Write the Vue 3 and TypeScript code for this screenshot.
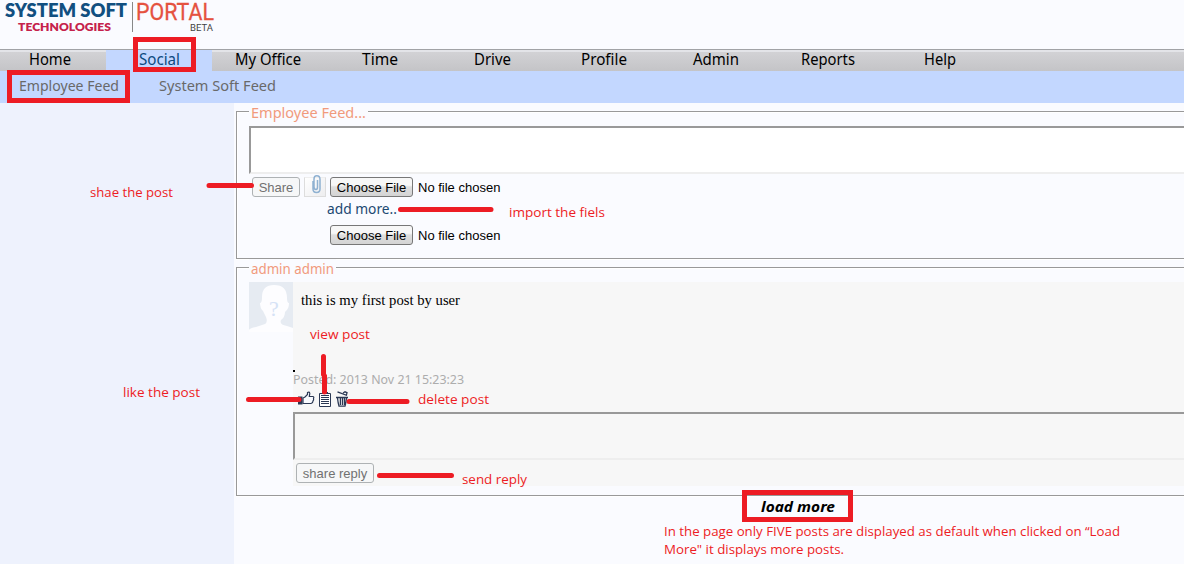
<script setup lang="ts">
interface Tab { label: string; width: number; text: number; active?: boolean }
interface Note { text: string; x: number; y: number; width: number }

const tabs: Tab[] = [
  { label: 'Home', width: 106, text: 42 },
  { label: 'Social', width: 106, text: 41, active: true },
  { label: 'My Office', width: 112, text: 66 },
  { label: 'Time', width: 112, text: 36 },
  { label: 'Drive', width: 112, text: 37 },
  { label: 'Profile', width: 112, text: 46 },
  { label: 'Admin', width: 112, text: 46 },
  { label: 'Reports', width: 112, text: 54 },
  { label: 'Help', width: 112, text: 32 },
]

const notes: Note[] = [
  { text: 'shae the post', x: 90, y: 197, width: 83 },
  { text: 'import the fiels', x: 509, y: 217, width: 96 },
  { text: 'view post', x: 310, y: 339, width: 60 },
  { text: 'like the post', x: 123, y: 397, width: 77 },
  { text: 'delete post', x: 418, y: 404, width: 71 },
  { text: 'send reply', x: 462, y: 484, width: 65 },
  { text: 'In the page only FIVE posts are displayed as default when clicked on “Load', x: 664, y: 536, width: 456 },
  { text: 'More" it displays more posts.', x: 664, y: 554, width: 180 },
]
</script>

<template>
  <div class="page">
    <header>
      <svg width="220" height="40" class="logo">
        <text x="5" y="17" class="lg system" textLength="122" lengthAdjust="spacingAndGlyphs">SYSTEM SOFT</text>
        <text x="18" y="31" class="lg tech" textLength="93" lengthAdjust="spacingAndGlyphs">TECHNOLOGIES</text>
        <path d="M132.500 2V32" stroke="#888" />
        <text x="136" y="20" class="portal" textLength="78" lengthAdjust="spacingAndGlyphs">PORTAL</text>
        <text x="190" y="31" class="beta" textLength="23" lengthAdjust="spacingAndGlyphs">BETA</text>
      </svg>
    </header>
    <nav>
      <a v-for="t in tabs" :key="t.label" :class="{ active: t.active, first: t.label === 'Home' }" :style="{ width: t.width + 'px' }">
        <svg :width="t.text" height="21"><text x="0" y="15" :textLength="t.text" lengthAdjust="spacingAndGlyphs">{{ t.label }}</text></svg>
      </a>
    </nav>
    <div class="subnav">
      <svg width="300" height="32">
        <text x="19" y="20" textLength="100" lengthAdjust="spacingAndGlyphs">Employee Feed</text>
        <text x="159" y="20" textLength="117" lengthAdjust="spacingAndGlyphs">System Soft Feed</text>
      </svg>
    </div>
    <div class="body">
      <aside></aside>
      <main>
        <section class="box compose">
          <div class="legend"><svg width="119" height="20"><text x="2" y="15" textLength="115" lengthAdjust="spacingAndGlyphs">Employee Feed...</text></svg></div>
          <div class="area white"></div>
          <div class="tools">
            <button class="dim share">Share</button>
            <span class="clip">
              <svg width="22" height="22" fill="none">
                <path d="M10 6V14Q10 17.500 13.500 17.500Q17 17.500 17 14V4.500Q17 .8 13.800 .8Q11 .8 11 4V12Q11 14.500 13 14.500Q14.500 14.500 14.500 12V5" stroke="#8fb1d1" stroke-width="1.500" />
              </svg>
            </span>
            <button class="file">Choose File</button><span class="none">No file chosen</span>
          </div>
          <div class="more"><svg width="72" height="20"><text x="0" y="15" textLength="70" lengthAdjust="spacingAndGlyphs">add more..</text></svg></div>
          <div class="tools second"><button class="file">Choose File</button><span class="none">No file chosen</span></div>
        </section>

        <section class="box post">
          <div class="legend"><svg width="87" height="20"><text x="2" y="15" textLength="83" lengthAdjust="spacingAndGlyphs">admin admin</text></svg></div>
          <div class="entry">
            <svg class="avatar" width="44" height="50">
              <rect width="44" height="50" fill="#e6ebf2" />
              <path d="M0 50V48Q1 46 7 45L16 42Q19 40 17 35L14 29Q11 26 11 21Q13 21 13 15Q13 3 25 3Q38 3 38 16Q38 21 40 21Q40 27 36 30Q36 35 32 38Q30 43 38 44L44 46V50Z" fill="#fdfdff" />
              <text x="20" y="34" class="unknown">?</text>
            </svg>
            <div class="content">
              <svg width="200" height="30" class="message"><text x="8" y="23" textLength="159" lengthAdjust="spacingAndGlyphs">this is my first post by user</text></svg>
              <div class="dot"></div>
              <svg width="180" height="18" class="posted"><text x="0" y="12" textLength="171" lengthAdjust="spacingAndGlyphs">Posted: 2013 Nov 21 15:23:23</text></svg>
              <div class="actions">
                <svg width="17" height="16">
                  <path d="M0 5.500H4.500V13.500H0Z" fill="#2b3854" />
                  <path d="M5 12.500V7L7 6L9.500 3.500V1.500Q11.500 .3 11.800 2.500L11.300 5.500H15Q16.300 6 15.500 7.500Q16 9 15 10Q15 12 13 12.500Z" fill="#f8fafe" stroke="#2b3854" stroke-width="1.200" />
                </svg>
                <svg width="12" height="16">
                  <path d="M.5 2.500H11.500V15.500H.5Z" fill="#fff" stroke="#2b3854" />
                  <path d="M3 1.500H9M2 4.500H10M2 6.500H10M2 8.500H10M2 10.500H10M2 12.500H10" stroke="#2b3854" />
                </svg>
                <svg width="13" height="16" fill="none" stroke="#2b3854" class="trash">
                  <path d="M1.500 .8L11 4.500M7 2L9 .8L11 1.700L10.400 4" stroke-width="1.300" />
                  <path d="M0 6.500H12" stroke-width="1.500" />
                  <path d="M1.500 7L2.200 12L3 15.200H9L9.800 12L10.500 7M4.400 7V14M6.500 7V14M8.500 7V14" stroke-width="1.300" />
                </svg>
              </div>
              <div class="area"></div>
              <button class="dim reply">share reply</button>
            </div>
          </div>
        </section>
        <div class="load"><svg width="78" height="20"><text x="1" y="14" textLength="74" lengthAdjust="spacingAndGlyphs">load more</text></svg></div>
      </main>
    </div>

    <svg class="marks" width="1184" height="564">
      <g fill="none" stroke="#ed1c24" stroke-width="5">
        <path d="M135.500 39.500H193.500V69.500H135.500Z" />
        <path d="M9.500 72.500H127.500V100.500H9.500Z" />
        <path d="M743.500 492.500H849.500V519.500H743.500Z" transform="translate(1 0)" />
        <g stroke-linecap="round">
          <path d="M209 185.500H251.500M400.500 209.500H491M379.500 475.500H451.500M248.500 399.500H299M349 401.500H407" />
          <path d="M323.500 356.500V374.500L324.500 376V392" />
        </g>
      </g>
      <text v-for="n in notes" :key="n.text" :x="n.x" :y="n.y" :textLength="n.width" lengthAdjust="spacingAndGlyphs">{{ n.text }}</text>
    </svg>
  </div>
</template>

<style>
html, body { margin: 0; overflow: hidden; background: #fafbff; }
</style>

<style scoped>
* { box-sizing: border-box; }
svg { display: block; flex: none; overflow: visible; }
.page { position: relative; width: 1184px; height: 564px; overflow: hidden; background: #fafbff; font-family: "Noto Sans", sans-serif; }
header { height: 49px; }
.lg { font-family: Lato, sans-serif; font-weight: 800; }
.system { font-size: 19.500px; fill: #114f80; }
.tech { font-size: 12px; fill: #c5214b; }
.portal { font-family: Roboto, sans-serif; font-size: 23.500px; fill: #e5523f; stroke: #e5523f; stroke-width: .3px; }
.beta { font-family: Roboto, sans-serif; font-size: 9.500px; fill: #444; }
nav { display: flex; height: 22px; border-top: 1px solid #a1a2a6; background: linear-gradient(#e3e4e8 0 2px, #d2d2d5 2px, #c4c4c7); }
nav a { display: flex; justify-content: center; height: 21px; font-size: 16px; }
nav a.first { padding-right: 6px; }
nav a.active { background: #c3d7ff; }
nav a.active text { fill: #0c4a80; }
.subnav { height: 32px; background: #c3d7ff; font-size: 15px; }
.subnav text { fill: #696969; }
.body { display: flex; height: 461px; }
aside { width: 234px; background: #eef2fd; flex: none; }
main { flex: 1; min-width: 0; padding: 8px 0 0 2px; }
.box { border: 1px solid #999; border-right: 0; box-shadow: inset 1px 1px #fff, 0 1px #fff; padding-left: 12px; }
.compose { height: 148px; }
.post { height: 229px; margin-top: 8px; }
.legend { width: max-content; height: 20px; margin-top: -9px; background: #fafbff; font-size: 15px; }
.legend text { fill: #f19a7c; }
.area { height: 48px; border: 2px solid #999; border-right: 0; border-bottom-color: #eee; }
.white { background: #fff; margin-top: 3px; }
.tools { display: flex; height: 20px; margin: 3px 0 0 3px; }
.tools.second { margin: 6px 0 0 81px; }
button { box-sizing: border-box; padding: 0; height: 20px; border: 1px solid #777; border-radius: 3px; font: 13px/17px "Liberation Sans", Arial, sans-serif; color: #000; background: linear-gradient(#f7f7f7 0 40%, #dedede 50%, #d4d4d4); }
.dim { border-color: #aeb2b4; color: #717171; background: #f6f7f8; }
.share { width: 48px; }
.clip { width: 22px; height: 20px; margin: 0 4px; border: 1px solid #ddd; border-top-color: #eee; background: linear-gradient(135deg, #fff, #ededef); }
.clip svg { margin: -3px 0 0 -2px; }
.file { width: 83px; }
.none { margin-left: 5px; font: 13px/21px "Liberation Sans", Arial, sans-serif; white-space: nowrap; }
.more { margin: 2px 0 0 78px; height: 20px; font-size: 15px; }
.more text { fill: #1c4972; }
.entry { display: flex; height: 204px; margin-top: 3px; }
.unknown { font: 22px "Liberation Serif", serif; fill: #d5e2f6; }
.content { flex: 1; background: #f7f7f7; min-width: 0; }
.message { font-family: "Liberation Serif", serif; font-size: 15px; }
.dot { width: 2px; height: 2px; background: #000; margin-top: 58px; }
.posted { font-size: 12px; }
.posted text { fill: #adadad; }
.actions { display: flex; gap: 4px; height: 22px; padding: 1px 0 0 5px; }
.trash { margin-left: 1px; }
.reply { display: block; width: 78px; margin: 3px 0 0 3px; }
.load { margin: 2px 0 0 524px; font-size: 15px; font-weight: 700; font-style: italic; }
.marks { position: absolute; inset: 0; }
.marks text { font-family: "Open Sans", sans-serif; font-size: 13px; fill: #ed1c24; }
</style>
